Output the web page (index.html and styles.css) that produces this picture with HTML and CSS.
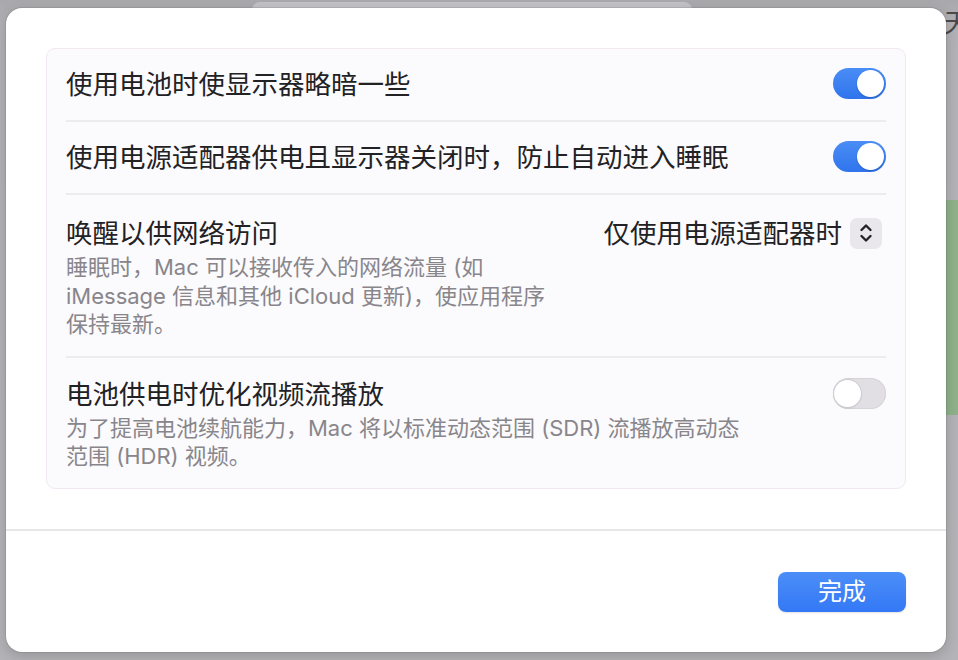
FILE: index.html
```html
<!DOCTYPE html>
<html lang="zh-CN">
<head>
<meta charset="utf-8">
<link rel="stylesheet" href="styles.css">
</head>
<body>
<div class="desktop">
  <div class="bg-tab"></div>
  <div class="bg-edge"><span class="bg-char">天</span></div>
  <div class="bg-green"></div>
  <div class="dialog">
    <div class="content">
      <div class="panel">
        <div class="row row-simple">
          <div class="title">使用电池时使显示器略暗一些</div>
          <div class="toggle on"><span class="knob"></span></div>
        </div>
        <div class="row row-simple">
          <div class="title">使用电源适配器供电且显示器关闭时，防止自动进入睡眠</div>
          <div class="toggle on"><span class="knob"></span></div>
        </div>
        <div class="row row-desc">
          <div class="text narrow">
            <div class="title">唤醒以供网络访问</div>
            <div class="desc">睡眠时，Mac 可以接收传入的网络流量 (如 iMessage 信息和其他 iCloud 更新)，使应用程序保持最新。</div>
          </div>
          <div class="ctrl">
            <span class="picker-label">仅使用电源适配器时</span>
            <span class="stepper">
              <svg width="16" height="22" viewBox="0 0 16 22"><path d="M3.5 8 L8 3.5 L12.5 8 M3.5 14 L8 18.5 L12.5 14" fill="none" stroke="#232325" stroke-width="2.4" stroke-linecap="round" stroke-linejoin="round"/></svg>
            </span>
          </div>
        </div>
        <div class="row row-desc last">
          <div class="text wide">
            <div class="title">电池供电时优化视频流播放</div>
            <div class="desc">为了提高电池续航能力，Mac 将以标准动态范围 (SDR) 流播放高动态范围 (HDR) 视频。</div>
          </div>
          <div class="ctrl">
            <div class="toggle off"><span class="knob"></span></div>
          </div>
        </div>
      </div>
    </div>
    <div class="footer">
      <button class="done">完成</button>
    </div>
  </div>
</div>
</body>
</html>
```
FILE: styles.css
```css
* { box-sizing: border-box; }
html, body { margin: 0; padding: 0; }
body {
  width: 958px;
  height: 660px;
  overflow: hidden;
  background: #b1b0b4;
  font-family: "Inter", "Noto Sans CJK SC", sans-serif;
  color: #262528;
}
.desktop {
  position: relative;
  width: 958px;
  height: 660px;
  padding: 8px 12px 8px 6px;
  background: linear-gradient(#a9a8ac, #b3b2b6 30px, #b4b3b7);
}
.bg-tab {
  position: absolute;
  left: 252px; top: 2px;
  width: 440px; height: 20px;
  border-radius: 8px;
  background: #c3c2c6;
}
.bg-edge {
  position: absolute;
  left: 944px; top: 8px;
  width: 14px; height: 32px;
  overflow: hidden;
}
.bg-char {
  display: block;
  width: 28px;
  font-size: 26px;
  line-height: 30px;
  color: #4a494c;
}
.bg-green {
  position: absolute;
  left: 946px; top: 200px;
  width: 12px; height: 215px;
  background: #8fb28a;
}
.dialog {
  position: relative;
  width: 940px;
  height: 644px;
  background: #ffffff;
  border-radius: 16px;
  box-shadow: 0 0 0 1px rgba(0,0,0,0.08), 0 4px 14px rgba(0,0,0,0.18);
  display: flex;
  flex-direction: column;
  overflow: hidden;
}
.content {
  padding: 40px 40px 0 40px;
  height: 523px;
  border-bottom: 2px solid #e6e5e8;
}
.panel {
  background: #fbfafc;
  border: 1px solid #f1e8f2;
  border-radius: 9px;
  display: flex;
  flex-direction: column;
}
.row {
  margin: 0 19px;
  border-bottom: 2px solid #ecebee;
  display: flex;
  justify-content: space-between;
}
.row.last { border-bottom: none; }
.row-simple {
  height: 73px;
  align-items: center;
  padding-bottom: 2px;
}
.title {
  font-size: 26.5px;
  line-height: 34px;
  color: #222124;
}
.row-desc {
  padding: 21px 0 17px 0;
  align-items: flex-start;
}
.row-desc.last { padding: 19px 0 17px 0; }
.desc {
  margin-top: 3px;
  font-size: 22px;
  line-height: 28.5px;
  color: #88868b;
}
.text.narrow { width: 488px; }
.text.wide { width: 686px; }
.ctrl {
  height: 34px;
  display: flex;
  align-items: center;
  gap: 8px;
}
.picker-label {
  font-size: 26.5px;
  line-height: 34px;
  color: #222124;
}
.stepper {
  width: 32px;
  height: 31px;
  border-radius: 7px;
  background: #e9e6ec;
  display: flex;
  align-items: center;
  justify-content: center;
  margin-right: 4px;
}
.toggle {
  width: 53px;
  height: 31px;
  border-radius: 16px;
  position: relative;
}
.toggle.on {
  background: linear-gradient(#4a8df6, #2f74ed);
}
.toggle.off {
  background: #e2dfe4;
  box-shadow: inset 0 0 0 1px #d6d3d9;
}
.knob {
  position: absolute;
  top: 2px;
  width: 27px;
  height: 27px;
  border-radius: 50%;
  background: #ffffff;
  box-shadow: 0 1px 2px rgba(0,0,0,0.2);
}
.toggle.on .knob { right: 2px; }
.toggle.off .knob { left: 1px; box-shadow: 0 0 0 1px #cfcbd2, 0 1px 2px rgba(0,0,0,0.15); }
.footer {
  flex: 1;
  display: flex;
  justify-content: flex-end;
  align-items: center;
  padding: 0 40px 0 0;
}
.done {
  width: 128px;
  height: 40px;
  border: none;
  border-radius: 8px;
  background: linear-gradient(#4b8ef8, #3478f6);
  color: #ffffff;
  font-family: "Inter", "Noto Sans CJK SC", sans-serif;
  font-size: 24px;
  line-height: 40px;
  padding: 0;
  box-shadow: 0 1px 2px rgba(0,0,0,0.12);
}
```
